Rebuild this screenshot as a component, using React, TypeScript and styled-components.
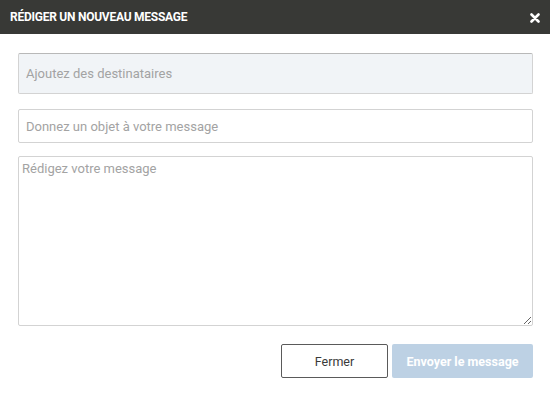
import React from 'react';
import styled, { createGlobalStyle } from 'styled-components';

const Global = createGlobalStyle`
  html, body { margin: 0; padding: 0; background: #fff; }
  body { font-family: Roboto, "Liberation Sans", Arial, sans-serif; }
  * { box-sizing: border-box; }
`;

const Modal = styled.div`
  width: 550px;
  height: 393px;
  display: flex;
  flex-direction: column;
  background: #fff;
`;

const Header = styled.div`
  height: 34px;
  background: #383936;
  display: flex;
  align-items: center;
  justify-content: space-between;
  padding: 0 10px 0 10px;
  color: #fff;
`;

const Title = styled.h1`
  margin: 0;
  font-size: 12px;
  font-weight: 700;
  letter-spacing: -0.25px;
`;

const Close = styled.button`
  border: 0;
  background: none;
  padding: 0;
  width: 10px;
  height: 10px;
  margin-top: 2px;
  display: flex;
  cursor: pointer;
`;

const Body = styled.div`
  display: flex;
  flex-direction: column;
  gap: 13px;
  padding: 19px 17px 0 18px;
`;

const Field = styled.input<{ $filled?: boolean }>`
  width: 100%;
  height: ${(p) => (p.$filled ? '41px' : '34px')};
  margin-bottom: ${(p) => (p.$filled ? '2px' : '0')};
  border: 1px solid #d3d3d3;
  border-top-color: ${(p) => (p.$filled ? '#b8b8b8' : '#d3d3d3')};
  background: ${(p) => (p.$filled ? '#f1f4f7' : '#fff')};
  border-radius: 2px;
  padding: 0 7px;
  font-family: inherit;
  font-size: 13px;
  color: #333;
  outline: none;
  &::placeholder { color: #a3a3a3; }
`;

const Area = styled.textarea`
  width: 100%;
  height: 170px;
  border: 1px solid #d3d3d3;
  border-radius: 2px;
  padding: 4px 3px;
  font-family: inherit;
  font-size: 13px;
  resize: vertical;
  outline: none;
  &::placeholder { color: #a3a3a3; }
`;

const Footer = styled.div`
  display: flex;
  justify-content: flex-end;
  gap: 4px;
  padding: 18px 17px 0 0;
`;

const Button = styled.button<{ $primary?: boolean }>`
  height: 34px;
  border-radius: 2px;
  font-family: inherit;
  font-size: 12.5px;
  cursor: pointer;
  ${(p) =>
    p.$primary
      ? `background: #bdd1e4; color: #fff; border: 0; font-weight: 700; width: 141px;`
      : `background: #fff; color: #3a3a3a; border: 1px solid #5a5a5a; font-weight: 400; width: 107px;`}
`;

export default function App() {
  return (
    <>
      <Global />
      <Modal>
        <Header>
          <Title>RÉDIGER UN NOUVEAU MESSAGE</Title>
          <Close aria-label="Fermer">
            <svg width="10" height="10" viewBox="0 0 10 10">
              <path d="M1.5 1.5 L8.5 8.5 M8.5 1.5 L1.5 8.5" stroke="#fff" strokeWidth="2.6" strokeLinecap="round" />
            </svg>
          </Close>
        </Header>
        <Body>
          <Field $filled placeholder="Ajoutez des destinataires" />
          <Field placeholder="Donnez un objet à votre message" />
          <Area placeholder="Rédigez votre message" />
        </Body>
        <Footer>
          <Button>Fermer</Button>
          <Button $primary disabled>Envoyer le message</Button>
        </Footer>
      </Modal>
    </>
  );
}
